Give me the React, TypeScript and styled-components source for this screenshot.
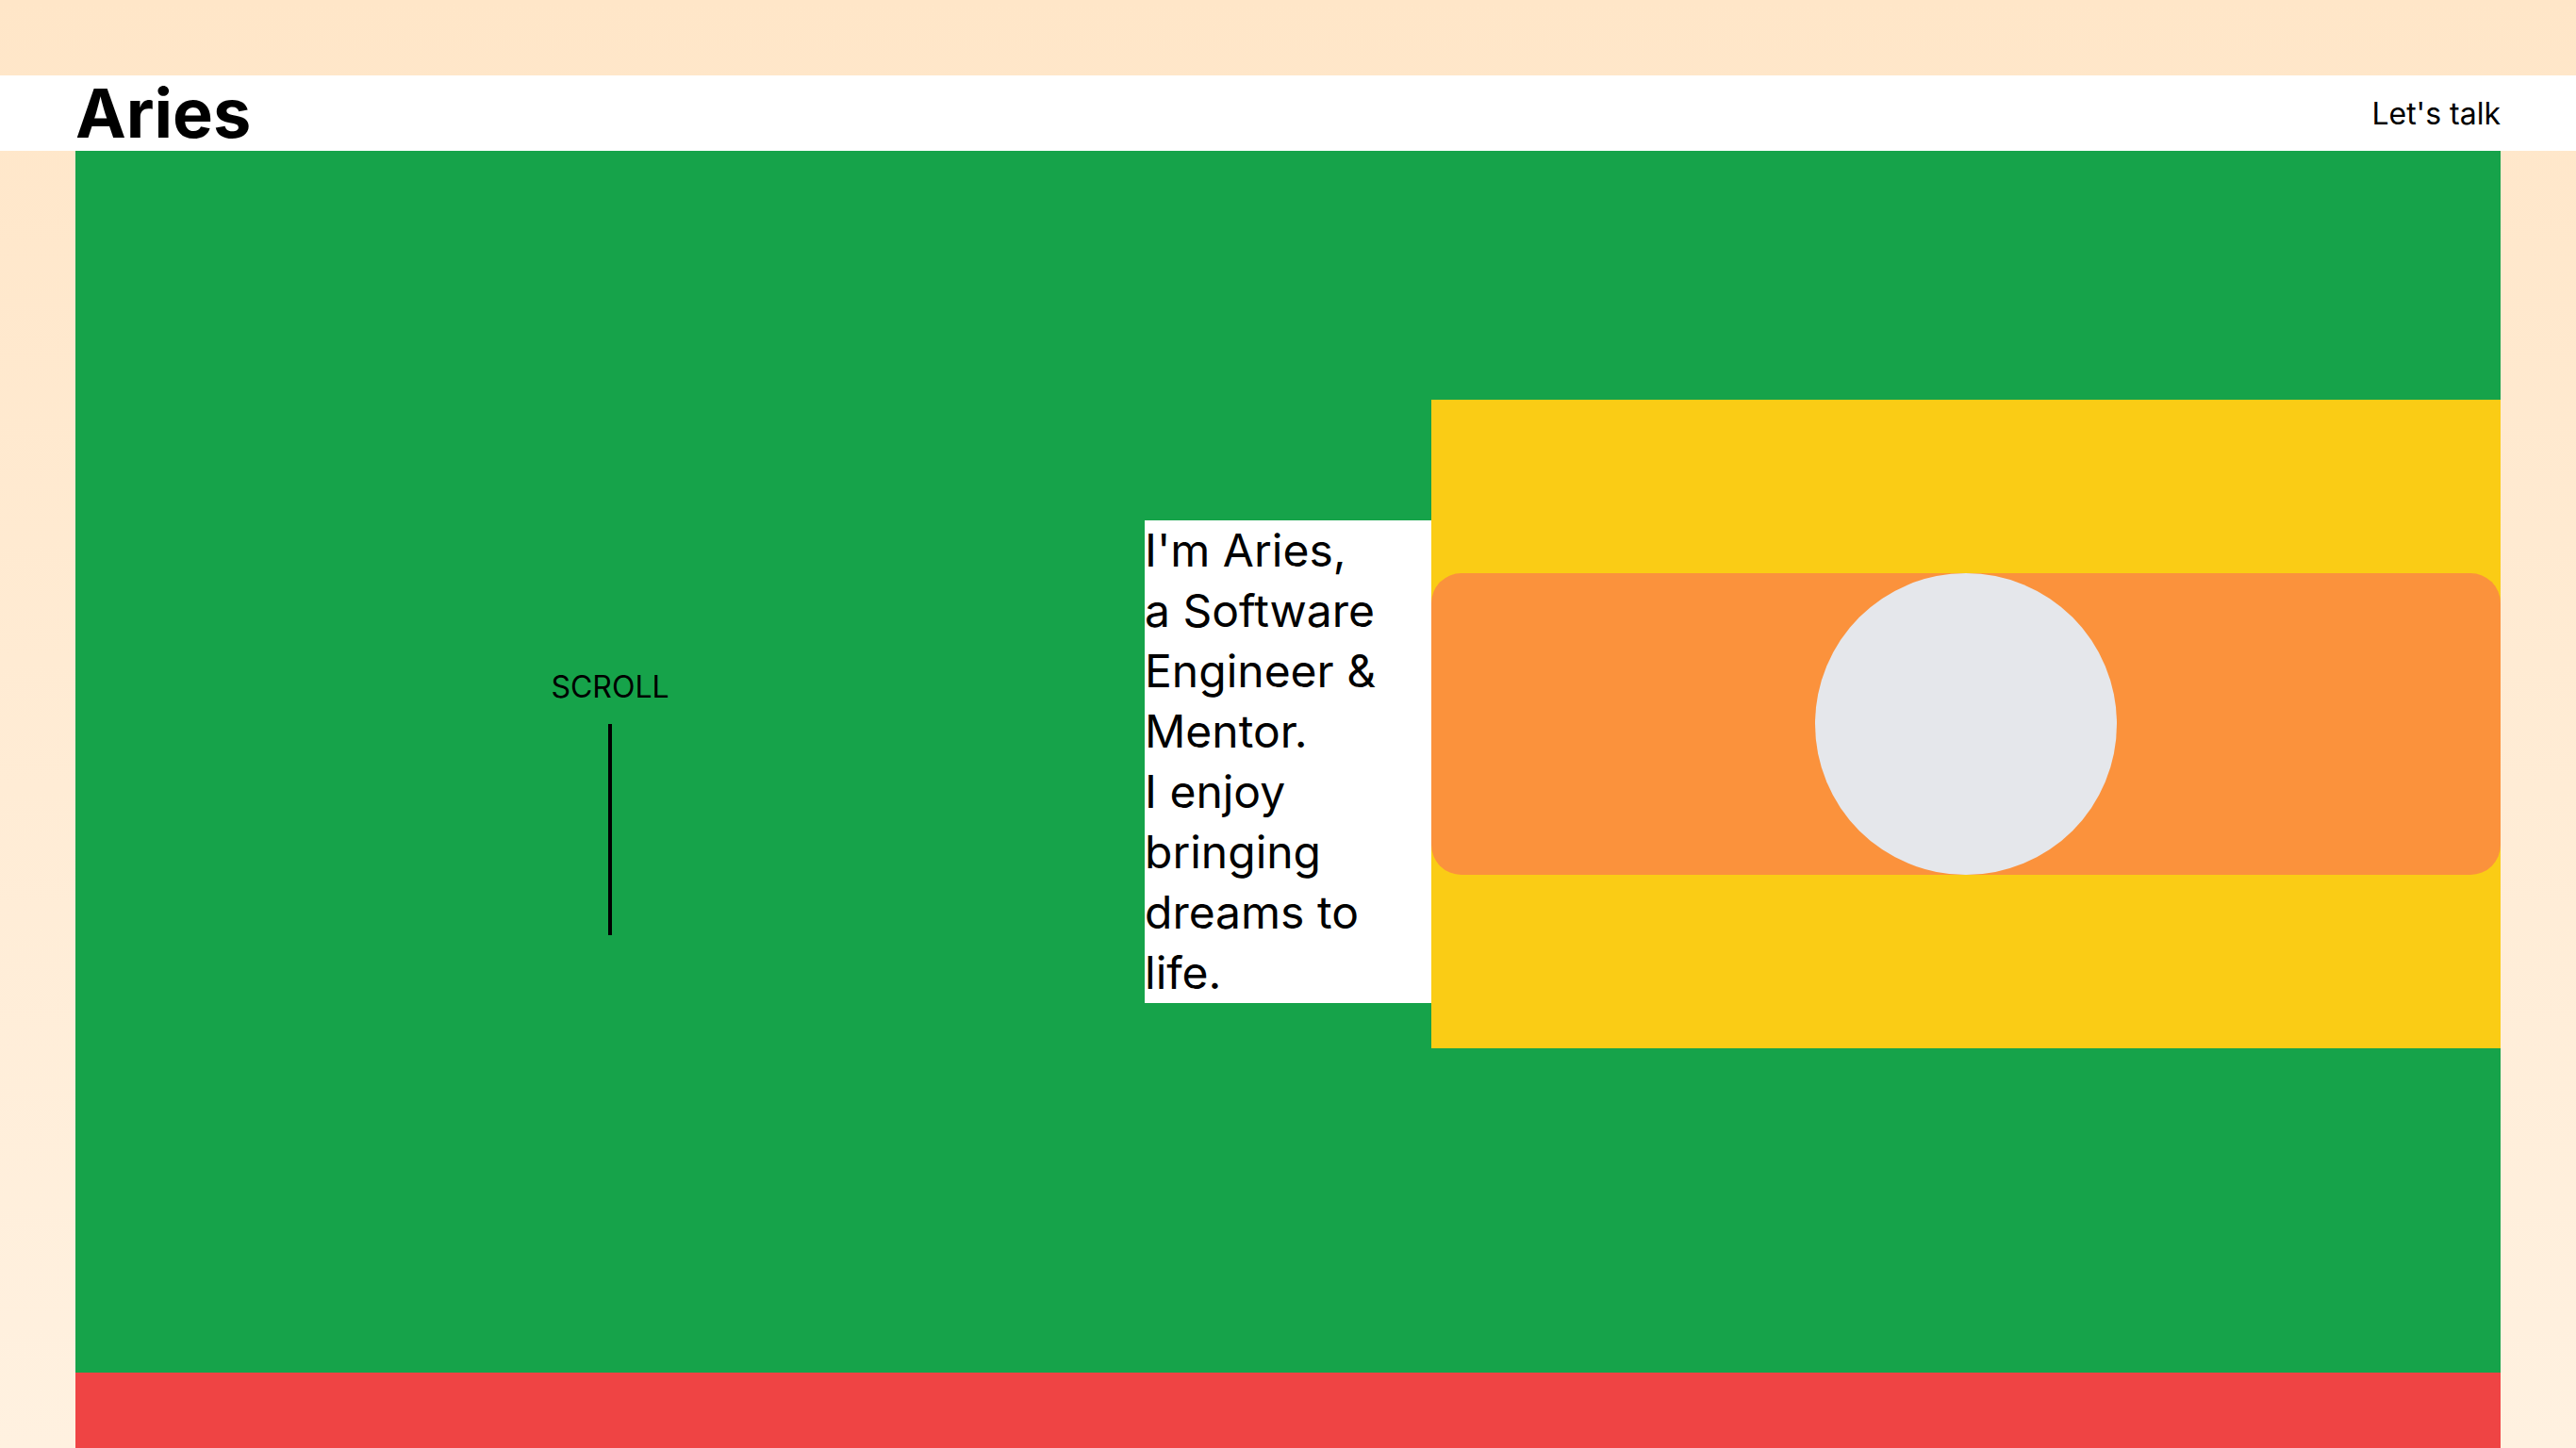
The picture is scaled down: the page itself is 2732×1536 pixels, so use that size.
import React from "react";
import styled, { createGlobalStyle } from "styled-components";

const GlobalStyle = createGlobalStyle`
  html, body {
    margin: 0;
    padding: 0;
  }
  body {
    font-family: Inter, "Noto Sans", sans-serif;
    color: #000;
    background: linear-gradient(180deg, #ffe6c8 0%, #fff1e0 100%);
    min-height: 1536px;
  }
  * { box-sizing: border-box; }
`;

const Page = styled.div`
  padding-top: 80px;
  min-height: 1536px;
  display: flex;
  flex-direction: column;
`;

const Header = styled.header`
  height: 80px;
  background: #ffffff;
  padding: 0 80px;
  display: flex;
  align-items: center;
  justify-content: space-between;
`;

const Logo = styled.h1`
  margin: 0;
  font-size: 72px;
  line-height: 1;
  font-weight: 700;
`;

const NavLink = styled.a`
  font-size: 32px;
  line-height: 1.5;
  margin-top: 2px;
  color: #000;
  text-decoration: none;
`;

const Main = styled.main`
  margin: 0 80px;
  display: flex;
  flex-direction: column;
`;

const Hero = styled.section`
  height: 1296px;
  background: #16a34a;
  display: flex;
  align-items: center;
`;

const Side = styled.div`
  flex: 1 1 0;
  display: flex;
  flex-direction: column;
  align-items: center;
`;

const ScrollHint = styled.div<{ $shift: number }>`
  margin-top: ${(p) => p.$shift}px;
  display: flex;
  flex-direction: column;
  align-items: center;
  gap: 20px;
`;

const ScrollLabel = styled.span`
  font-size: 32px;
  line-height: 39px;
  font-weight: 400;
`;

const ScrollLine = styled.div`
  width: 4px;
  height: 224px;
  background: #000;
`;

const Intro = styled.p`
  margin: 0;
  width: 304px;
  flex: none;
  background: #ffffff;
  font-size: 48px;
  line-height: 64px;
  font-weight: 400;
`;

const Stage = styled.div<{ $lift: number }>`
  flex: 1 1 0;
  margin-bottom: ${(p) => p.$lift}px;
  display: flex;
  align-items: center;
`;

const YellowBlock = styled.div`
  width: 100%;
  height: 688px;
  background: #facc15;
  display: flex;
  align-items: center;
`;

const OrangeBand = styled.div`
  width: 100%;
  height: 320px;
  background: #fb923c;
  border-radius: 32px;
  display: flex;
  align-items: center;
  justify-content: center;
`;

const Avatar = styled.div`
  width: 320px;
  height: 320px;
  border-radius: 50%;
  background: #e5e7eb;
`;

const Footer = styled.footer`
  height: 80px;
  background: #ef4444;
`;

export default function App() {
  return (
    <>
      <GlobalStyle />
      <Page>
        <Header>
          <Logo>Aries</Logo>
          <NavLink href="#">Let's talk</NavLink>
        </Header>
        <Main>
          <Hero>
            <Side>
              <ScrollHint $shift={84}>
                <ScrollLabel>SCROLL</ScrollLabel>
                <ScrollLine />
              </ScrollHint>
            </Side>
            <Intro>
              I'm Aries,
              <br />
              a Software Engineer &amp; Mentor.
              <br />
              I enjoy bringing dreams to life.
            </Intro>
            <Stage $lift={80}>
              <YellowBlock>
                <OrangeBand>
                  <Avatar />
                </OrangeBand>
              </YellowBlock>
            </Stage>
          </Hero>
          <Footer />
        </Main>
      </Page>
    </>
  );
}
